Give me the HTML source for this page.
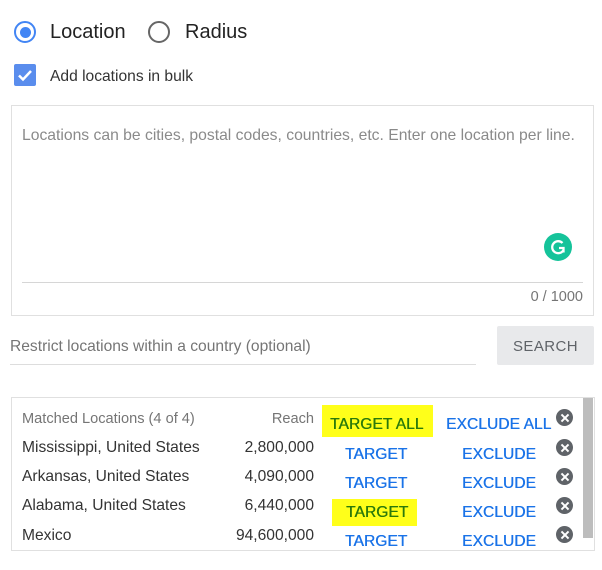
<!DOCTYPE html>
<html><head><style>
body{margin:0;width:602px;height:570px;background:#fff;font-family:"Liberation Sans",sans-serif;position:relative;overflow:hidden}
.a{position:absolute;white-space:nowrap}
.t{font-size:15.6px;color:#333;line-height:18px}
.g{color:#757575}
.btn{font-size:15.5px;color:#1a73e8;line-height:18px;letter-spacing:0.1px;text-shadow:0.4px 0 0 currentColor}
.gr{color:#2b7a0b}
.x{position:absolute;width:17px;height:17px;border-radius:50%;background:#5f6368;left:556px}
.x:before,.x:after{content:"";position:absolute;left:7.5px;top:3.5px;width:2px;height:10px;background:#fff;transform:rotate(45deg)}
.x:after{transform:rotate(-45deg)}
.r{text-align:right;width:120px;left:194px}
</style></head><body>
<div class="a" style="left:14px;top:21px;width:18px;height:18px;border:2.5px solid #4285f4;border-radius:50%"></div>
<div class="a" style="left:20px;top:27px;width:11px;height:11px;background:#4285f4;border-radius:50%"></div>
<div class="a" style="left:50px;top:21px;font-size:20px;color:#222">Location</div>
<div class="a" style="left:148px;top:21px;width:18px;height:18px;border:2.5px solid #666;border-radius:50%"></div>
<div class="a" style="left:185px;top:21px;font-size:20px;color:#222">Radius</div>
<div class="a" style="left:14px;top:64px;width:22px;height:22px;background:#5a8ded;border-radius:2px"></div>
<svg class="a" style="left:14px;top:64px" width="22" height="22"><path d="M5 11.5l4 4 8-8.5" stroke="#fff" stroke-width="2.5" fill="none"/></svg>
<div class="a t" style="left:50px;top:68px">Add locations in bulk</div>
<div class="a" style="left:11px;top:105px;width:581px;height:209px;border:1px solid #e0e0e0"></div>
<div class="a t g" style="left:22px;top:127px;color:#8a8a8a;font-size:15.7px">Locations can be cities, postal codes, countries, etc. Enter one location per line.</div>
<div class="a" style="left:544px;top:233px;width:28px;height:28px;border-radius:50%;background:#15c39a"></div>
<svg class="a" style="left:544px;top:233px" width="28" height="28"><path d="M18.5 10a6 6 0 1 0 1 7M15 15h4.5v4.5" stroke="#fff" stroke-width="2.3" fill="none"/></svg>
<div class="a" style="left:22px;top:282px;width:561px;height:1px;background:#d6d6d6"></div>
<div class="a" style="left:483px;top:289px;width:100px;text-align:right;font-size:14.5px;color:#757575">0 / 1000</div>
<div class="a t g" style="left:10px;top:338px">Restrict locations within a country (optional)</div>
<div class="a" style="left:10px;top:364px;width:466px;height:1px;background:#ddd"></div>
<div class="a" style="left:497px;top:326px;width:97px;height:39px;background:#e8e9eb;border-radius:2px;text-align:center;line-height:42px;font-size:15px;color:#5f6368;letter-spacing:0.4px">SEARCH</div>
<div class="a" style="left:11px;top:397px;width:582px;height:152px;border:1px solid #e0e0e0"></div>
<div class="a" style="left:583px;top:398px;width:10px;height:140px;background:#bdbdbd"></div>
<div class="a" style="left:322px;top:405px;width:111px;height:32px;background:#ffff1a"></div>
<div class="a" style="left:332px;top:499px;width:85px;height:27px;background:#ffff1a"></div>
<div class="a t g" style="left:22px;top:410px;font-size:14.6px">Matched Locations (4 of 4)</div>
<div class="a t g r" style="top:410px;font-size:14.6px">Reach</div>
<div class="a btn gr" style="left:330px;top:416px">TARGET ALL</div>
<div class="a btn" style="left:446px;top:416px">EXCLUDE ALL</div>
<div class="x" style="top:409px"></div>
<div class="a t" style="left:22px;top:439px">Mississippi, United States</div>
<div class="a t r" style="top:439px">2,800,000</div>
<div class="a btn" style="left:345px;top:446px">TARGET</div>
<div class="a btn" style="left:462px;top:446px">EXCLUDE</div>
<div class="x" style="top:439px"></div>
<div class="a t" style="left:22px;top:468px">Arkansas, United States</div>
<div class="a t r" style="top:468px">4,090,000</div>
<div class="a btn" style="left:345px;top:475px">TARGET</div>
<div class="a btn" style="left:462px;top:475px">EXCLUDE</div>
<div class="x" style="top:468px"></div>
<div class="a t" style="left:22px;top:497px">Alabama, United States</div>
<div class="a t r" style="top:497px">6,440,000</div>
<div class="a btn gr" style="left:346px;top:504px">TARGET</div>
<div class="a btn" style="left:462px;top:504px">EXCLUDE</div>
<div class="x" style="top:497px"></div>
<div class="a t" style="left:22px;top:527px">Mexico</div>
<div class="a t r" style="top:527px">94,600,000</div>
<div class="a btn" style="left:345px;top:533px">TARGET</div>
<div class="a btn" style="left:462px;top:533px">EXCLUDE</div>
<div class="x" style="top:526px"></div>
</body></html>
